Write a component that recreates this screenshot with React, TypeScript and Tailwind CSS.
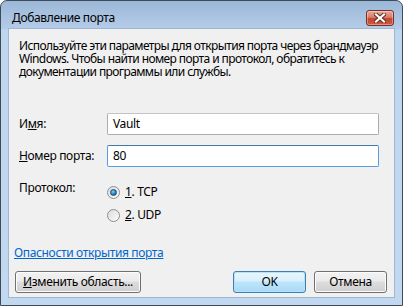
import React from "react";

const font = { fontFamily: '"Noto Sans", "Open Sans", sans-serif' };

function Radio({ checked }: { checked?: boolean }) {
  return (
    <span className="relative flex h-[13px] w-[13px] items-center justify-center rounded-full border border-[#8c8f92] bg-gradient-to-br from-[#dcdcdc] to-[#fbfbfb]">
      {checked && (
        <span className="h-[7px] w-[7px] rounded-full border border-[#1b4d74] bg-[radial-gradient(circle_at_40%_35%,#8fd0f5_0%,#2a86c6_50%,#124a78_100%)]" />
      )}
    </span>
  );
}

function Button({ children, def, className = "" }: { children: React.ReactNode; def?: boolean; className?: string }) {
  return (
    <div
      className={
        "flex h-[22px] items-center justify-center rounded-[3px] border text-[12px] text-black " +
        (def
          ? "border-[#3c7fb1] shadow-[inset_0_0_0_1px_#b7e3f8] bg-[linear-gradient(#eaf6fd_0%,#d9f0fc_45%,#bee6fd_50%,#a7d9f5_100%)] "
          : "border-[#707070] shadow-[inset_0_0_0_1px_#fcfcfc] bg-[linear-gradient(#f2f2f2_0%,#ebebeb_45%,#dddddd_50%,#cfcfcf_100%)] ") +
        className
      }
    >
      {children}
    </div>
  );
}

export default function App() {
  return (
    <div style={font} className="h-[306px] w-[403px] overflow-hidden bg-white tracking-[-0.35px]">
      <div className="flex h-[306px] w-[403px] flex-col rounded-t-[7px] border border-[#3e4a58] bg-[linear-gradient(#9cb8d8_0px,#b4cce8_28px,#bfd6ef_29px,#c2d8f0_100%)]">
        {/* Title bar */}
        <div className="flex h-[27px] shrink-0 items-start justify-between pl-[11px] pr-[8px]">
          <span className="pt-[9px] text-[12px] leading-[16px] text-black">Добавление порта</span>
          <div className="mt-[9px] flex h-[16px] w-[28px] items-center justify-center rounded-[3px] border border-[#7a2f24] bg-[linear-gradient(#e8a79b_0%,#d67e6c_45%,#c2432d_55%,#d05b45_100%)] shadow-[inset_0_0_0_1px_rgba(255,255,255,0.35)]">
            <svg width="12" height="10" viewBox="0 0 12 10">
              <path d="M2 1.5 L10 8.5 M10 1.5 L2 8.5" stroke="#5a2a22" strokeWidth="4" strokeLinecap="square" />
              <path d="M2 1.5 L10 8.5 M10 1.5 L2 8.5" stroke="#ffffff" strokeWidth="2.2" strokeLinecap="square" />
            </svg>
          </div>
        </div>
        {/* Client */}
        <div className="mx-[7px] mb-[7px] flex flex-1 flex-col border border-[#9fb7d2] bg-[#f0f0f0] text-[12px] text-black">
          <p className="pl-[10px] pr-[1px] pt-[10px] leading-[13px] tracking-[-0.6px]">
            Используйте эти параметры для открытия порта через брандмауэр Windows. Чтобы найти номер порта и протокол, обратитесь к документации программы или службы.
          </p>
          <div className="mt-[35px] flex flex-col gap-[10px] pl-[10px] pr-[15px]">
            <div className="flex items-center">
              <span className="w-[88px] shrink-0">
                И<span className="underline">м</span>я:
              </span>
              <div className="flex h-[22px] flex-1 items-center rounded-[2px] border border-[#abadb3] border-t-[#c0c3c9] bg-white pl-[5px]">
                Vault
              </div>
            </div>
            <div className="flex items-center">
              <span className="w-[88px] shrink-0">
                <span className="underline">Н</span>омер порта:
              </span>
              <div className="flex h-[22px] flex-1 items-center rounded-[2px] border border-[#569de5] border-t-[#3d7bad] bg-white pl-[5px]">
                80
              </div>
            </div>
          </div>
          <div className="mt-[13px] flex pl-[10px]">
            <span className="w-[88px] shrink-0 leading-[16px]">Протокол:</span>
            <div className="flex flex-col gap-[7px] pt-[4px]">
              <div className="flex items-center gap-[5px]">
                <Radio checked />
                <span className="leading-[16px]">
                  <span className="underline">1</span>. TCP
                </span>
              </div>
              <div className="flex items-center gap-[5px]">
                <Radio />
                <span className="leading-[16px]">
                  <span className="underline">2</span>. UDP
                </span>
              </div>
            </div>
          </div>
          <div className="mt-[22px] pl-[5px] leading-[16px] text-[#0066cc] underline">Опасности открытия порта</div>
          <div className="mt-[10px] flex items-center pl-[6px] pr-[7px]">
            <Button className="w-[126px]">
              <span>
                <span className="underline">И</span>зменить область...
              </span>
            </Button>
            <div className="flex-1" />
            <Button def className="w-[73px]">OK</Button>
            <Button className="ml-[8px] w-[73px]">Отмена</Button>
          </div>
        </div>
      </div>
    </div>
  );
}
